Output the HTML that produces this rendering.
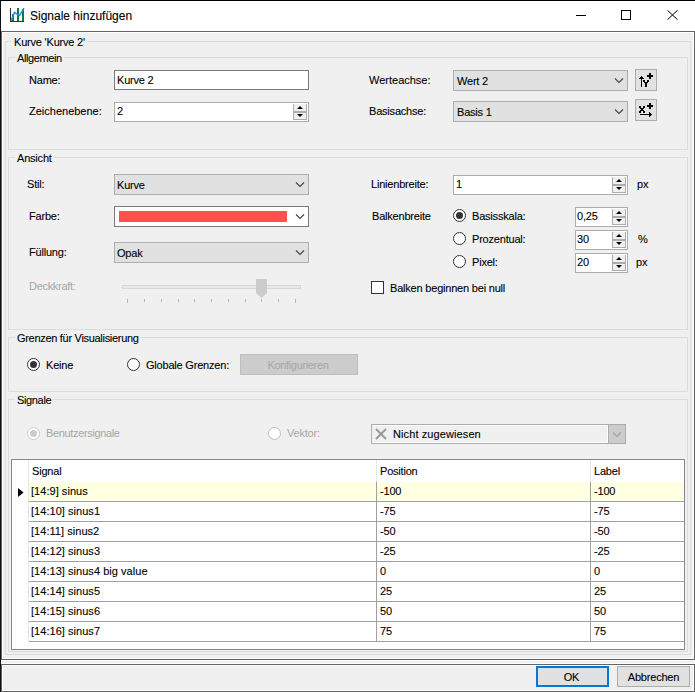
<!DOCTYPE html>
<html><head><meta charset="utf-8">
<style>
html,body{margin:0;padding:0;}
body{width:695px;height:692px;position:relative;overflow:hidden;background:#f0f0f0;font-family:"Liberation Sans",sans-serif;}
.a{position:absolute;box-sizing:border-box;}
.t{position:absolute;margin-top:1px;font-size:11px;line-height:13px;white-space:nowrap;letter-spacing:-0.2px;color:#000;-webkit-text-stroke:0.1px currentColor;}
.dis{color:#a6a6a6;-webkit-text-stroke:0 !important;}
.gg{position:absolute;box-sizing:border-box;border:1px solid #dcdcdc;}
.gw{display:none;}
.lbl{position:absolute;margin-top:1px;font-size:11px;line-height:13px;white-space:nowrap;letter-spacing:-0.2px;background:#f0f0f0;padding:0 2px;color:#000;-webkit-text-stroke:0.1px currentColor;}
.tb{position:absolute;box-sizing:border-box;background:#fff;border:1px solid #7a7a7a;}
.cb{position:absolute;box-sizing:border-box;background:#e1e1e1;border:1px solid #adadad;}
.sp{position:absolute;box-sizing:border-box;background:#fff;border:1px solid #acacac;}
.spb{position:absolute;box-sizing:border-box;border:1px solid #acacac;background:#f0f0f0;}
.chev{position:absolute;}
.rd{position:absolute;box-sizing:border-box;width:13px;height:13px;border-radius:50%;border:1px solid #333;background:#fff;}
.rd.on::after{content:"";position:absolute;left:2px;top:2px;width:7px;height:7px;border-radius:50%;background:#333;}
.row{position:absolute;left:29px;width:655px;height:1px;background:#a0a0a0;}
</style></head><body>

<!-- window frame -->
<div class="a" style="left:0;top:0;width:695px;height:31px;background:#fff;"></div>
<div class="a" style="left:0;top:0;width:695px;height:1px;background:#000;"></div>
<div class="a" style="left:0;top:0;width:1px;height:692px;background:#111;"></div>

<!-- title icon -->
<svg class="a" style="left:6px;top:4px;" width="24" height="22" viewBox="0 0 24 22">
  <rect x="6" y="10" width="2" height="8" fill="#137a3c"/>
  <rect x="11" y="4" width="2" height="14" fill="#137a3c"/>
  <rect x="16" y="5" width="2" height="13" fill="#137a3c"/>
  <rect x="4" y="4" width="1" height="14" fill="#2d2d2d"/>
  <rect x="4" y="17" width="14" height="1" fill="#2d2d2d"/>
  <polyline points="5.2,16.6 8.5,8.3 13.5,11.6 18,4.1" fill="none" stroke="#2a8ae0" stroke-width="1.5" stroke-linejoin="round"/>
</svg>
<div class="t" style="left:30px;top:8px;font-size:12px;line-height:14px;letter-spacing:0;">Signale hinzufügen</div>

<!-- caption buttons -->
<div class="a" style="left:576px;top:15px;width:10px;height:1px;background:#000;"></div>
<div class="a" style="left:621px;top:10px;width:10px;height:10px;border:1px solid #000;"></div>
<svg class="a" style="left:667px;top:10px;" width="11" height="10" viewBox="0 0 11 10"><path d="M0.5 0.3 L10.5 9.7 M10.5 0.3 L0.5 9.7" stroke="#000" stroke-width="1"/></svg>

<!-- upper panel -->
<div class="a" style="left:1px;top:31px;width:694px;height:629px;border:1px solid #646464;"></div>
<div class="a" style="left:2px;top:32px;width:692px;height:627px;border:1px solid #fff;"></div>
<!-- splitter strip -->
<div class="a" style="left:1px;top:660px;width:694px;height:1px;background:#fff;"></div>
<div class="a" style="left:1px;top:661px;width:1px;height:2px;background:#fff;"></div>
<div class="a" style="left:1px;top:663px;width:694px;height:1px;background:#fff;"></div>
<!-- lower panel -->
<div class="a" style="left:1px;top:664px;width:694px;height:28px;border:1px solid #646464;"></div>
<div class="a" style="left:2px;top:665px;width:692px;height:26px;border:1px solid #fff;"></div>

<!-- group Kurve -->
<div class="gw" style="left:6px;top:42px;width:686px;height:614px;"></div>
<div class="gg" style="left:5px;top:41px;width:686px;height:614px;"></div>
<div class="lbl" style="left:12px;top:35px;">Kurve 'Kurve 2'</div>

<!-- group Allgemein -->
<div class="gw" style="left:9px;top:58px;width:680px;height:93px;"></div>
<div class="gg" style="left:8px;top:57px;width:680px;height:93px;"></div>
<div class="lbl" style="left:15px;top:51px;letter-spacing:-0.4px;">Allgemein</div>

<div class="t" style="left:29px;top:73px;">Name:</div>
<div class="tb" style="left:114px;top:70px;width:195px;height:20px;"></div>
<div class="t" style="left:117px;top:73px;">Kurve 2</div>

<div class="t" style="left:29px;top:104px;letter-spacing:0;">Zeichenebene:</div>
<div class="sp" style="left:114px;top:102px;width:195px;height:20px;"></div>
<div class="t" style="left:117px;top:104px;">2</div>


<div class="t" style="left:369px;top:73px;letter-spacing:0;">Werteachse:</div>
<div class="cb" style="left:453px;top:70px;width:175px;height:21px;"></div>
<div class="t" style="left:457px;top:74px;">Wert 2</div>
<svg class="chev" style="left:614px;top:77px;" width="10" height="7" viewBox="0 0 10 7"><polyline points="1,1.5 5,5.5 9,1.5" fill="none" stroke="#444" stroke-width="1.1"/></svg>
<div class="cb" style="left:635px;top:69px;width:22px;height:22px;"></div>
<svg class="a" style="left:635px;top:69px;" width="22" height="22" viewBox="0 0 22 22" shape-rendering="crispEdges">
<rect x="6" y="7" width="1" height="11" fill="#000"/>
<rect x="5" y="8" width="3" height="1" fill="#000"/>
<rect x="4" y="9" width="5" height="1" fill="#000"/>
<rect x="8" y="11" width="2" height="2" fill="#000"/>
<rect x="12" y="11" width="2" height="2" fill="#000"/>
<rect x="9" y="13" width="4" height="1" fill="#000"/>
<rect x="10" y="13" width="2" height="5" fill="#000"/>
<rect x="12" y="6" width="6" height="2" fill="#000"/>
<rect x="14" y="4" width="2" height="6" fill="#000"/>
</svg>

<div class="t" style="left:369px;top:104px;">Basisachse:</div>
<div class="cb" style="left:453px;top:101px;width:175px;height:21px;"></div>
<div class="t" style="left:457px;top:105px;">Basis 1</div>
<svg class="chev" style="left:614px;top:108px;" width="10" height="7" viewBox="0 0 10 7"><polyline points="1,1.5 5,5.5 9,1.5" fill="none" stroke="#444" stroke-width="1.1"/></svg>
<div class="cb" style="left:635px;top:99px;width:22px;height:22px;"></div>
<svg class="a" style="left:635px;top:99px;" width="22" height="22" viewBox="0 0 22 22" shape-rendering="crispEdges">
<rect x="4" y="7" width="2" height="2" fill="#000"/>
<rect x="8" y="7" width="2" height="2" fill="#000"/>
<rect x="5" y="9" width="4" height="1" fill="#000"/>
<rect x="6" y="10" width="2" height="1" fill="#000"/>
<rect x="5" y="11" width="4" height="1" fill="#000"/>
<rect x="4" y="12" width="2" height="2" fill="#000"/>
<rect x="8" y="12" width="2" height="2" fill="#000"/>
<rect x="5" y="15" width="12" height="1" fill="#000"/>
<rect x="14" y="13" width="1" height="5" fill="#000"/>
<rect x="15" y="14" width="1" height="3" fill="#000"/>
<rect x="12" y="6" width="6" height="2" fill="#000"/>
<rect x="14" y="4" width="2" height="6" fill="#000"/>
</svg>

<!-- group Ansicht -->
<div class="gw" style="left:9px;top:158px;width:680px;height:173px;"></div>
<div class="gg" style="left:8px;top:157px;width:680px;height:173px;"></div>
<div class="lbl" style="left:15px;top:151px;">Ansicht</div>

<div class="t" style="left:27px;top:177px;">Stil:</div>
<div class="cb" style="left:114px;top:174px;width:195px;height:21px;"></div>
<div class="t" style="left:117px;top:178px;">Kurve</div>
<svg class="chev" style="left:295px;top:181px;" width="10" height="7" viewBox="0 0 10 7"><polyline points="1,1.5 5,5.5 9,1.5" fill="none" stroke="#444" stroke-width="1.1"/></svg>

<div class="t" style="left:29px;top:209px;">Farbe:</div>
<div class="tb" style="left:114px;top:206px;width:195px;height:21px;"></div>
<div class="a" style="left:119px;top:211px;width:168px;height:11px;background:#ff5050;"></div>
<svg class="chev" style="left:295px;top:213px;" width="10" height="7" viewBox="0 0 10 7"><polyline points="1,1.5 5,5.5 9,1.5" fill="none" stroke="#444" stroke-width="1.1"/></svg>

<div class="t" style="left:29px;top:245px;">Füllung:</div>
<div class="cb" style="left:114px;top:242px;width:195px;height:21px;"></div>
<div class="t" style="left:117px;top:246px;">Opak</div>
<svg class="chev" style="left:295px;top:249px;" width="10" height="7" viewBox="0 0 10 7"><polyline points="1,1.5 5,5.5 9,1.5" fill="none" stroke="#444" stroke-width="1.1"/></svg>

<div class="t dis" style="left:29px;top:279px;letter-spacing:-0.3px;">Deckkraft:</div>
<div class="a" style="left:122px;top:285px;width:179px;height:4px;border:1px solid #d6d6d6;background:#e7eaea;"></div>
<svg class="a" style="left:256px;top:279px;" width="11" height="19" viewBox="0 0 11 19"><path d="M0 0 H11 V14 L5.5 19 L0 14 Z" fill="#cccccc"/></svg>
<div id="ticks"></div>
<div class="a" style="left:127px;top:299px;width:1px;height:4px;background:#b4b4b4;"></div>
<div class="a" style="left:144px;top:299px;width:1px;height:3px;background:#b4b4b4;"></div>
<div class="a" style="left:161px;top:299px;width:1px;height:3px;background:#b4b4b4;"></div>
<div class="a" style="left:178px;top:299px;width:1px;height:3px;background:#b4b4b4;"></div>
<div class="a" style="left:194px;top:299px;width:1px;height:3px;background:#b4b4b4;"></div>
<div class="a" style="left:211px;top:299px;width:1px;height:3px;background:#b4b4b4;"></div>
<div class="a" style="left:228px;top:299px;width:1px;height:3px;background:#b4b4b4;"></div>
<div class="a" style="left:245px;top:299px;width:1px;height:3px;background:#b4b4b4;"></div>
<div class="a" style="left:261px;top:299px;width:1px;height:3px;background:#b4b4b4;"></div>
<div class="a" style="left:278px;top:299px;width:1px;height:3px;background:#b4b4b4;"></div>
<div class="a" style="left:295px;top:299px;width:1px;height:4px;background:#b4b4b4;"></div>
<!--/ticks-->

<div class="t" style="left:371px;top:177px;">Linienbreite:</div>
<div class="sp" style="left:453px;top:175px;width:175px;height:20px;"></div>
<div class="t" style="left:456px;top:177px;">1</div>
<div class="t" style="left:637px;top:177px;">px</div>

<div class="t" style="left:372px;top:209px;">Balkenbreite</div>
<div class="rd on" style="left:453px;top:209px;"></div>
<div class="t" style="left:472px;top:209px;">Basisskala:</div>
<div class="sp" style="left:575px;top:207px;width:53px;height:20px;"></div>
<div class="t" style="left:577px;top:209px;">0,25</div>

<div class="rd" style="left:453px;top:232px;"></div>
<div class="t" style="left:472px;top:232px;">Prozentual:</div>
<div class="sp" style="left:575px;top:230px;width:53px;height:20px;"></div>
<div class="t" style="left:577px;top:232px;">30</div>
<div class="t" style="left:638px;top:232px;">%</div>

<div class="rd" style="left:453px;top:255px;"></div>
<div class="t" style="left:472px;top:255px;">Pixel:</div>
<div class="sp" style="left:575px;top:253px;width:53px;height:20px;"></div>
<div class="t" style="left:577px;top:255px;">20</div>
<div class="t" style="left:636px;top:255px;">px</div>

<div class="a" style="left:371px;top:281px;width:13px;height:13px;border:1px solid #333;background:#fff;"></div>
<div class="t" style="left:390px;top:281px;">Balken beginnen bei null</div>

<!-- group Grenzen -->
<div class="gw" style="left:9px;top:338px;width:680px;height:55px;"></div>
<div class="gg" style="left:8px;top:337px;width:680px;height:55px;"></div>
<div class="lbl" style="left:15px;top:331px;letter-spacing:-0.3px;">Grenzen für Visualisierung</div>
<div class="rd on" style="left:27px;top:358px;"></div>
<div class="t" style="left:46px;top:358px;">Keine</div>
<div class="rd" style="left:127px;top:358px;"></div>
<div class="t" style="left:146px;top:358px;">Globale Grenzen:</div>
<div class="a" style="left:240px;top:354px;width:118px;height:21px;background:#cccccc;border:1px solid #bfbfbf;"></div>
<div class="t dis" style="left:239px;top:358px;width:118px;text-align:center;letter-spacing:-0.35px;">Konfigurieren</div>

<!-- group Signale -->
<div class="gw" style="left:9px;top:400px;width:680px;height:253px;"></div>
<div class="gg" style="left:8px;top:399px;width:680px;height:253px;"></div>
<div class="lbl" style="left:15px;top:393px;letter-spacing:-0.35px;">Signale</div>
<div class="rd" style="left:27px;top:427px;border-color:#cccccc;"></div>
<div class="a" style="left:30px;top:430px;width:7px;height:7px;border-radius:50%;background:#cccccc;"></div>
<div class="t dis" style="left:46px;top:426px;letter-spacing:-0.35px;">Benutzersignale</div>
<div class="rd" style="left:268px;top:427px;border-color:#bcbcbc;"></div>
<div class="t dis" style="left:287px;top:426px;">Vektor:</div>
<div class="a" style="left:371px;top:424px;width:255px;height:20px;border:1px solid #abadb3;background:#f0f0f0;"></div>
<div class="a" style="left:372px;top:425px;width:236px;height:18px;border:1px solid #fff;border-left:none;"></div>
<div class="a" style="left:608px;top:424px;width:18px;height:20px;border:1px solid #abadb3;background:#cccccc;"></div>
<svg class="chev" style="left:612px;top:431px;" width="10" height="7" viewBox="0 0 10 7"><polyline points="1,1.5 5,5.5 9,1.5" fill="none" stroke="#a0a0a0" stroke-width="1.1"/></svg>
<svg class="a" style="left:375px;top:428px;" width="12" height="12" viewBox="0 0 12 12"><path d="M1 1 L11 11 M11 1 L1 11" stroke="#999" stroke-width="2"/></svg>
<div class="t" style="left:393px;top:427px;letter-spacing:0.1px;">Nicht zugewiesen</div>

<!-- table -->
<div id="grid"></div>
<div class="a" style="left:11px;top:459px;width:674px;height:191px;border:1px solid #828790;background:#fff;"></div>
<div class="a" style="left:29px;top:482px;width:655px;height:19px;background:#ffffe1;"></div>
<div class="a" style="left:28px;top:460px;width:1px;height:182px;background:#e6e6e6;"></div>
<div class="a" style="left:376px;top:460px;width:1px;height:22px;background:#e6e6e6;"></div>
<div class="a" style="left:590px;top:460px;width:1px;height:22px;background:#e6e6e6;"></div>
<div class="a" style="left:376px;top:482px;width:1px;height:160px;background:#a0a0a0;"></div>
<div class="a" style="left:590px;top:482px;width:1px;height:160px;background:#a0a0a0;"></div>
<div class="row" style="top:501px;"></div>
<div class="row" style="top:521px;"></div>
<div class="row" style="top:541px;"></div>
<div class="row" style="top:561px;"></div>
<div class="row" style="top:581px;"></div>
<div class="row" style="top:601px;"></div>
<div class="row" style="top:621px;"></div>
<div class="row" style="top:641px;"></div>
<svg class="a" style="left:18px;top:488px;" width="6" height="9" viewBox="0 0 6 9"><path d="M0 0 L5.5 4.5 L0 9 Z" fill="#000"/></svg>
<div class="t" style="left:32px;top:464px;">Signal</div>
<div class="t" style="left:380px;top:464px;">Position</div>
<div class="t" style="left:594px;top:464px;">Label</div>
<div class="t" style="left:31px;top:484px;letter-spacing:0.04px;">[14:9] sinus</div>
<div class="t" style="left:380px;top:484px;">-100</div>
<div class="t" style="left:594px;top:484px;">-100</div>
<div class="t" style="left:31px;top:504px;letter-spacing:0.04px;">[14:10] sinus1</div>
<div class="t" style="left:380px;top:504px;">-75</div>
<div class="t" style="left:594px;top:504px;">-75</div>
<div class="t" style="left:31px;top:524px;letter-spacing:0.04px;">[14:11] sinus2</div>
<div class="t" style="left:380px;top:524px;">-50</div>
<div class="t" style="left:594px;top:524px;">-50</div>
<div class="t" style="left:31px;top:544px;letter-spacing:0.04px;">[14:12] sinus3</div>
<div class="t" style="left:380px;top:544px;">-25</div>
<div class="t" style="left:594px;top:544px;">-25</div>
<div class="t" style="left:31px;top:564px;letter-spacing:0.04px;">[14:13] sinus4 big value</div>
<div class="t" style="left:380px;top:564px;">0</div>
<div class="t" style="left:594px;top:564px;">0</div>
<div class="t" style="left:31px;top:584px;letter-spacing:0.04px;">[14:14] sinus5</div>
<div class="t" style="left:380px;top:584px;">25</div>
<div class="t" style="left:594px;top:584px;">25</div>
<div class="t" style="left:31px;top:604px;letter-spacing:0.04px;">[14:15] sinus6</div>
<div class="t" style="left:380px;top:604px;">50</div>
<div class="t" style="left:594px;top:604px;">50</div>
<div class="t" style="left:31px;top:624px;letter-spacing:0.04px;">[14:16] sinus7</div>
<div class="t" style="left:380px;top:624px;">75</div>
<div class="t" style="left:594px;top:624px;">75</div>
<!--/grid-->

<div id="spin1"></div>
<div class="spb" style="left:293px;top:104px;width:14px;height:8px;border-top:none;"></div>
<div class="spb" style="left:293px;top:112px;width:14px;height:8px;"></div>
<svg class="a" style="left:297px;top:106px;" width="6" height="3" viewBox="0 0 6 3"><path d="M3 0 L6 3 H0 Z" fill="#000"/></svg>
<svg class="a" style="left:297px;top:114px;" width="6" height="3" viewBox="0 0 6 3"><path d="M0 0 H6 L3 3 Z" fill="#000"/></svg>
<div class="spb" style="left:612px;top:177px;width:14px;height:8px;border-top:none;"></div>
<div class="spb" style="left:612px;top:185px;width:14px;height:8px;"></div>
<svg class="a" style="left:616px;top:179px;" width="6" height="3" viewBox="0 0 6 3"><path d="M3 0 L6 3 H0 Z" fill="#000"/></svg>
<svg class="a" style="left:616px;top:187px;" width="6" height="3" viewBox="0 0 6 3"><path d="M0 0 H6 L3 3 Z" fill="#000"/></svg>
<div class="spb" style="left:612px;top:209px;width:14px;height:8px;border-top:none;"></div>
<div class="spb" style="left:612px;top:217px;width:14px;height:8px;"></div>
<svg class="a" style="left:616px;top:211px;" width="6" height="3" viewBox="0 0 6 3"><path d="M3 0 L6 3 H0 Z" fill="#000"/></svg>
<svg class="a" style="left:616px;top:219px;" width="6" height="3" viewBox="0 0 6 3"><path d="M0 0 H6 L3 3 Z" fill="#000"/></svg>
<div class="spb" style="left:612px;top:232px;width:14px;height:8px;border-top:none;"></div>
<div class="spb" style="left:612px;top:240px;width:14px;height:8px;"></div>
<svg class="a" style="left:616px;top:234px;" width="6" height="3" viewBox="0 0 6 3"><path d="M3 0 L6 3 H0 Z" fill="#000"/></svg>
<svg class="a" style="left:616px;top:242px;" width="6" height="3" viewBox="0 0 6 3"><path d="M0 0 H6 L3 3 Z" fill="#000"/></svg>
<div class="spb" style="left:612px;top:255px;width:14px;height:8px;border-top:none;"></div>
<div class="spb" style="left:612px;top:263px;width:14px;height:8px;"></div>
<svg class="a" style="left:616px;top:257px;" width="6" height="3" viewBox="0 0 6 3"><path d="M3 0 L6 3 H0 Z" fill="#000"/></svg>
<svg class="a" style="left:616px;top:265px;" width="6" height="3" viewBox="0 0 6 3"><path d="M0 0 H6 L3 3 Z" fill="#000"/></svg>
<!--/spin-->
<!-- buttons -->
<div class="a" style="left:536px;top:666px;width:73px;height:21px;border:2px solid #0078d7;background:#e1e1e1;"></div>
<div class="t" style="left:535px;top:670px;width:73px;text-align:center;">OK</div>
<div class="a" style="left:617px;top:666px;width:73px;height:21px;border:1px solid #adadad;background:#e1e1e1;"></div>
<div class="t" style="left:617px;top:670px;width:73px;text-align:center;">Abbrechen</div>

</body></html>
